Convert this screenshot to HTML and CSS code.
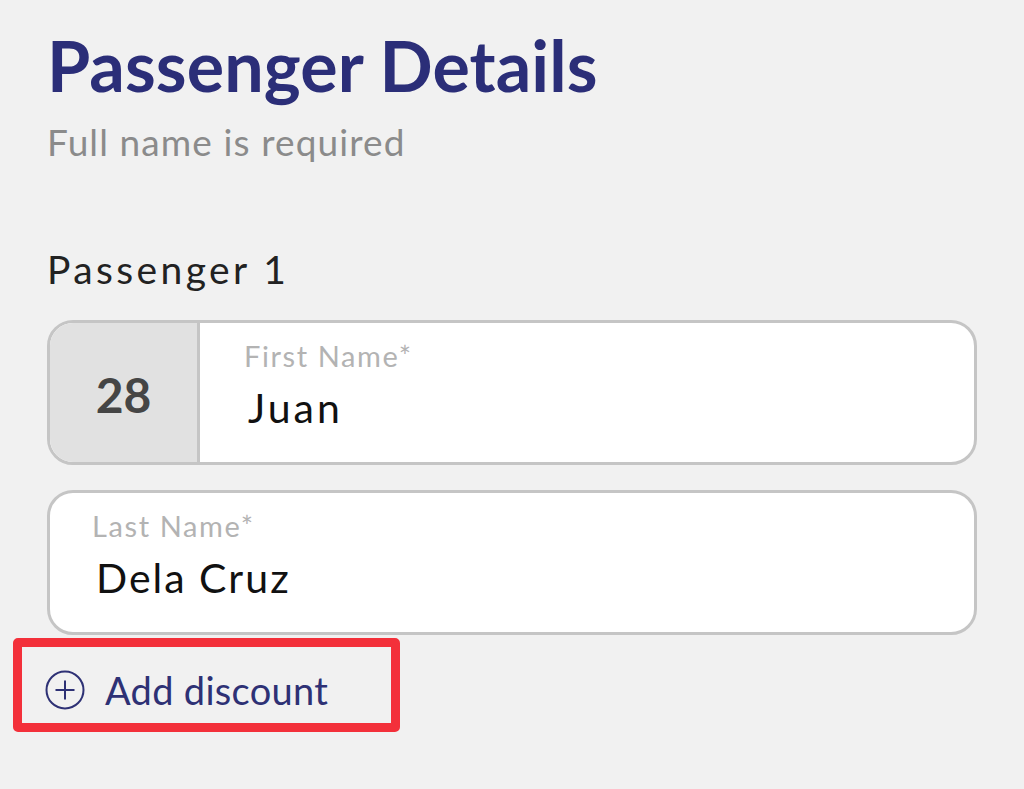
FILE: index.html
```html
<!DOCTYPE html>
<html>
<head>
<meta charset="utf-8">
<link rel="stylesheet" href="styles.css">
</head>
<body>
<main class="page">
  <h1 class="title">Passenger Details</h1>
  <p class="subtitle">Full name is required</p>
  <h2 class="pax">Passenger 1</h2>
  <div class="field first">
    <div class="num">28</div>
    <div class="input">
      <span class="label">First Name*</span>
      <span class="value">Juan</span>
    </div>
  </div>
  <div class="field last">
    <div class="input">
      <span class="label">Last Name*</span>
      <span class="value">Dela Cruz</span>
    </div>
  </div>
  <div class="discount-wrap">
    <button class="discount">
      <svg class="plus" width="40" height="40" viewBox="0 0 40 40"><circle cx="20" cy="20" r="18.5" fill="none" stroke="#2e3175" stroke-width="2"/><path d="M20 10.5v19M10.5 20h19" stroke="#2e3175" stroke-width="2"/></svg>
      <span>Add discount</span>
    </button>
    <div class="highlight"></div>
  </div>
</main>
</body>
</html>
```
FILE: styles.css
```css
html, body { margin: 0; padding: 0; }
body {
  background: #f1f1f1;
  font-family: "Lato", "Noto Sans", sans-serif;
  width: 1024px;
  height: 789px;
  overflow: hidden;
}
.page { padding: 20px 47px 0 47px; }
.title {
  margin: 0;
  font-size: 70px;
  line-height: 90px;
  font-weight: 700;
  color: #2b2e78;
  letter-spacing: 0.1px;
}
.subtitle {
  margin: 10px 0 0 0;
  font-size: 37px;
  line-height: 44px;
  color: #8b8b8b;
  letter-spacing: 1.1px;
}
.pax {
  margin: 82px 0 0 0;
  font-size: 39px;
  line-height: 46px;
  font-weight: 400;
  color: #222;
  letter-spacing: 3.4px;
}
.field {
  box-sizing: border-box;
  width: 930px;
  height: 145px;
  flex: none;
  border: 3px solid #c5c5c5;
  border-radius: 26px;
  background: #fff;
  display: flex;
  overflow: hidden;
}
.field.first { margin-top: 28px; }
.field.last { margin-top: 25px; }
.num {
  width: 150px;
  background: #e1e1e1;
  border-right: 3px solid #c5c5c5;
  display: flex;
  align-items: center;
  justify-content: center;
  font-size: 48px;
  font-weight: 700;
  color: #454545;
  padding-top: 4px;
  box-sizing: border-box;
}
.input {
  display: flex;
  flex-direction: column;
  padding: 15px 0 0 42px;
}
.first .input { padding-left: 44px; }
.label {
  font-size: 29px;
  line-height: 36px;
  color: #b3b3b3;
  letter-spacing: 1.6px;
}
.value {
  margin-top: 10px;
  margin-left: 4px;
  font-size: 41px;
  line-height: 48px;
  color: #111;
  letter-spacing: 2px;
}
.first .value { letter-spacing: 3px; }
.discount-wrap {
  position: relative;
  margin-top: 32px;
}
.discount {
  display: flex;
  align-items: center;
  gap: 20px;
  background: none;
  border: 0;
  padding: 0;
  font-family: inherit;
  font-size: 38px;
  line-height: 46px;
  color: #2e3175;
  letter-spacing: 0.3px;
  margin-left: -2px;
}
.plus { display: block; }
.highlight {
  position: absolute;
  left: -34px;
  top: -29px;
  width: 369px;
  height: 76px;
  border: 9px solid #f3303a;
  border-radius: 5px;
}
```
